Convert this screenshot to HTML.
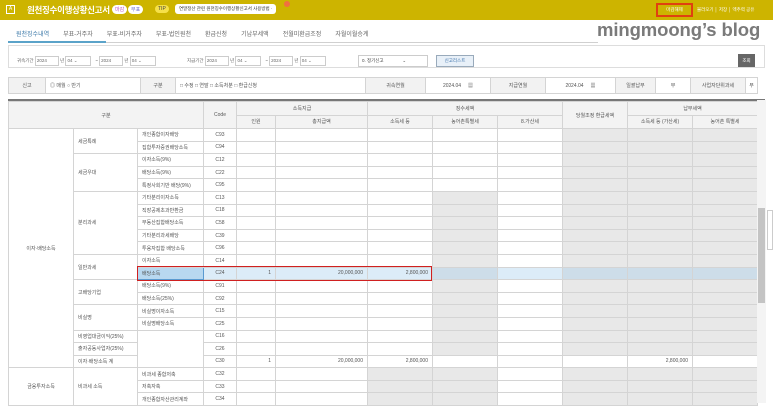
<!DOCTYPE html>
<html><head><meta charset="utf-8"><style>
*{box-sizing:border-box;margin:0;padding:0}
body{width:773px;height:403px;overflow:hidden;background:#fff;font-family:"Liberation Sans","Noto Sans CJK KR",sans-serif;font-size:5.5px;color:#444;position:relative}
.a{position:absolute;white-space:nowrap}
.top{left:0;top:0;width:773px;height:20px;background:#cdb400}
.tabs span{margin-right:14px}
.sel{border:1px solid #ccc;height:10px;background:#fff}
table{position:absolute;left:8px;top:100px;border-collapse:collapse;table-layout:fixed;width:749px}
td,th{border:1px solid #d4d4d4;height:12.6px;font-weight:normal;text-align:center;padding:0 2px;overflow:hidden;white-space:nowrap;font-size:5px;color:#555}
th{background:#f3f3f3;height:13.5px}
td.l{text-align:left;padding-left:4px}
td.r{text-align:right;padding-right:4px}
.g{background:#e8e8e8}
.hl td{background:#dcecf8}
.hl td.g{background:#cddde9}
.inf td.lbl{background:#f2f2f2}
</style></head><body>
<div class="a top"></div>
<div class="a" style="left:6px;top:5px;width:9px;height:9px;border:1px solid #fff;color:#fff;font-size:5px;text-align:center;line-height:7px">A</div>
<div class="a" style="left:27px;top:3.5px;color:#fff;font-size:8.5px;font-weight:bold;letter-spacing:-0.3px">원천징수이행상황신고서</div>
<div class="a" style="left:112px;top:5px;background:#fff;color:#c050c0;border-radius:5px;font-size:5px;padding:1px 3px">마감</div>
<div class="a" style="left:128px;top:5px;background:#fff;color:#7070d0;border-radius:5px;font-size:5px;padding:1px 3px">부표</div>
<div class="a" style="left:155px;top:5px;background:#f5e04a;color:#444;border-radius:5px;font-size:5px;padding:1px 3px">TIP</div>
<div class="a" style="left:175px;top:4px;background:#fff;border-radius:3px;font-size:4.5px;padding:2px 4px;color:#333">연말정산 관련 원천징수이행상황신고서 사용방법 ·</div>
<div class="a" style="left:284px;top:1px;width:6px;height:6px;border-radius:3px;background:#f07040"></div>
<div class="a" style="left:656px;top:3px;width:37px;height:14px;border:2px solid #e04010;color:#fff;font-size:4.5px;text-align:center;line-height:10px">마감해제</div>
<div class="a" style="left:697px;top:7px;color:#fff;font-size:4.5px">불러오기 │ 저장 │ 엑추력 공유</div>
<div class="a tabs" style="left:16px;top:29px;font-size:6px;color:#666"><span style="color:#3a78a8">원천징수내역</span><span>부표-거주자</span><span>부표-비거주자</span><span>부표-법인원천</span><span>환급신청</span><span>기납부세액</span><span>전월미환급조정</span><span>자월이월승계</span></div>
<div class="a" style="left:8px;top:42px;width:590px;height:1px;background:#d0d0d0"></div>
<div class="a" style="left:8px;top:41px;width:98px;height:2px;background:#5ba3c9"></div>
<div class="a" style="left:597px;top:19px;font-size:18.5px;font-weight:bold;color:#7a7a7a;letter-spacing:-0.1px;font-family:'Liberation Sans',sans-serif">mingmoong’s blog</div>
<div class="a" style="left:8px;top:45px;width:757px;height:1px;background:#ddd"></div>
<div class="a" style="left:8px;top:46px;width:1px;height:21px;background:#ddd"></div>
<div class="a" style="left:764px;top:46px;width:1px;height:21px;background:#ddd"></div>
<div class="a" style="left:8px;top:67px;width:757px;height:1px;background:#ddd"></div>
<div class="a" style="left:17px;top:56px;font-size:4.5px;color:#666">귀속기간 <span class="sel" style="display:inline-block;width:24px;padding:1px">2024</span> 년 <span class="sel" style="display:inline-block;width:26px;padding:1px">04 ⌄</span> &nbsp; ~ <span class="sel" style="display:inline-block;width:24px;padding:1px">2024</span> 년 <span class="sel" style="display:inline-block;width:26px;padding:1px">04 ⌄</span></div>
<div class="a" style="left:187px;top:56px;font-size:4.5px;color:#666">지급기간 <span class="sel" style="display:inline-block;width:24px;padding:1px">2024</span> 년 <span class="sel" style="display:inline-block;width:26px;padding:1px">04 ⌄</span> &nbsp; ~ <span class="sel" style="display:inline-block;width:24px;padding:1px">2024</span> 년 <span class="sel" style="display:inline-block;width:26px;padding:1px">04 ⌄</span></div>
<div class="a sel" style="left:358px;top:55px;width:70px;height:12px;font-size:4.5px;padding:2px 3px">0. 정기신고 &nbsp; &nbsp; &nbsp; &nbsp; &nbsp; &nbsp; &nbsp; ⌄</div>
<div class="a" style="left:436px;top:55px;width:38px;height:12px;border:1px solid #9ab;background:#e8f0f8;color:#3a6fa8;font-size:4.5px;text-align:center;line-height:10px">신고리스트</div>
<div class="a" style="left:738px;top:54px;width:17px;height:13px;background:#666;color:#fff;font-size:4.5px;text-align:center;line-height:13px">조회</div>
<table style="top:77px" class="inf"><tr style="height:16px">
<td class="lbl" style="width:37px">신고</td><td class="l" style="width:95px">◎ 매월 ○ 반기</td><td class="lbl" style="width:35px">구분</td><td class="l" style="width:190px">□ 수정 □ 연말 □ 소득처분 □ 환급신청</td><td class="lbl" style="width:60px">귀속연월</td><td style="width:65px">2024.04 &nbsp; &nbsp; ▦</td><td class="lbl" style="width:55px">지급연월</td><td style="width:70px">2024.04 &nbsp; &nbsp; ▦</td><td class="lbl" style="width:40px">일괄납부</td><td style="width:35px">부</td><td class="lbl" style="width:55px">사업자단위과세</td><td style="width:12px">부</td></tr></table>
<div class="a" style="left:8px;top:99px;width:757px;height:2px;background:#777"></div>
<table style="top:101px">
<colgroup><col style="width:65px"><col style="width:64px"><col style="width:66px"><col style="width:33px"><col style="width:39px"><col style="width:92px"><col style="width:65px"><col style="width:65px"><col style="width:65px"><col style="width:65px"><col style="width:65px"><col style="width:65px"></colgroup>
<tr><th colspan="3" rowspan="2">구분</th><th rowspan="2">Code</th><th colspan="2">소득지급</th><th colspan="3">징수세액</th><th rowspan="2">당월조정 환급세액</th><th colspan="2">납부세액</th></tr>
<tr><th>인원</th><th>총지급액</th><th>소득세 등</th><th>농어촌특별세</th><th>8.가산세</th><th>소득세 등 (가산세)</th><th>농어촌 특별세</th></tr>
<tr><td rowspan="19" style="background:#fff">이자·배당소득</td><td rowspan="2" class="l">세금특례</td><td class="l">개인종합이자배당</td><td>C93</td><td></td><td></td><td></td><td></td><td></td><td class="g"></td><td class="g"></td><td class="g"></td></tr>
<tr><td class="l">집합투자증권배당소득</td><td>C94</td><td></td><td></td><td></td><td></td><td></td><td class="g"></td><td class="g"></td><td class="g"></td></tr>
<tr><td rowspan="3" class="l">세금우대</td><td class="l">이자소득(9%)</td><td>C12</td><td></td><td></td><td></td><td></td><td></td><td class="g"></td><td class="g"></td><td class="g"></td></tr>
<tr><td class="l">배당소득(9%)</td><td>C22</td><td></td><td></td><td></td><td></td><td></td><td class="g"></td><td class="g"></td><td class="g"></td></tr>
<tr><td class="l">특정사회기반 배당(9%)</td><td>C95</td><td></td><td></td><td></td><td></td><td></td><td class="g"></td><td class="g"></td><td class="g"></td></tr>
<tr><td rowspan="5" class="l">분리과세</td><td class="l">기타분리이자소득</td><td>C13</td><td></td><td></td><td></td><td class="g"></td><td></td><td class="g"></td><td class="g"></td><td class="g"></td></tr>
<tr><td class="l">직장공제초과반환금</td><td>C18</td><td></td><td></td><td></td><td class="g"></td><td></td><td class="g"></td><td class="g"></td><td class="g"></td></tr>
<tr><td class="l">부동산집합배당소득</td><td>C58</td><td></td><td></td><td></td><td class="g"></td><td></td><td class="g"></td><td class="g"></td><td class="g"></td></tr>
<tr><td class="l">기타분리과세배당</td><td>C39</td><td></td><td></td><td></td><td class="g"></td><td></td><td class="g"></td><td class="g"></td><td class="g"></td></tr>
<tr><td class="l">투융자집합 배당소득</td><td>C96</td><td></td><td></td><td></td><td class="g"></td><td></td><td class="g"></td><td class="g"></td><td class="g"></td></tr>
<tr><td rowspan="2" class="l">일반과세</td><td class="l">이자소득</td><td>C14</td><td></td><td></td><td></td><td class="g"></td><td></td><td class="g"></td><td class="g"></td><td class="g"></td></tr>
<tr class="hl"><td class="l" style="background:#b8d8f0;border:1px solid #5a9ad0">배당소득</td><td>C24</td><td class="r">1</td><td class="r">20,000,000</td><td class="r">2,800,000</td><td class="g"></td><td></td><td class="g"></td><td class="g"></td><td class="g"></td></tr>
<tr><td rowspan="2" class="l">고배당기업</td><td class="l">배당소득(9%)</td><td>C91</td><td></td><td></td><td></td><td class="g"></td><td></td><td class="g"></td><td class="g"></td><td class="g"></td></tr>
<tr><td class="l">배당소득(25%)</td><td>C92</td><td></td><td></td><td></td><td class="g"></td><td></td><td class="g"></td><td class="g"></td><td class="g"></td></tr>
<tr><td rowspan="2" class="l">비실명</td><td class="l">비실명이자소득</td><td>C15</td><td></td><td></td><td></td><td class="g"></td><td></td><td class="g"></td><td class="g"></td><td class="g"></td></tr>
<tr><td class="l">비실명배당소득</td><td>C25</td><td></td><td></td><td></td><td class="g"></td><td></td><td class="g"></td><td class="g"></td><td class="g"></td></tr>
<tr><td class="l">비영업대금이익(25%)</td><td rowspan="3"></td><td>C16</td><td></td><td></td><td></td><td class="g"></td><td></td><td class="g"></td><td class="g"></td><td class="g"></td></tr>
<tr><td class="l">출자공동사업자(25%)</td><td>C26</td><td></td><td></td><td></td><td class="g"></td><td></td><td class="g"></td><td class="g"></td><td class="g"></td></tr>
<tr><td class="l">이자·배당소득 계</td><td>C30</td><td class="r">1</td><td class="r">20,000,000</td><td class="r">2,800,000</td><td></td><td></td><td></td><td class="r">2,800,000</td><td></td></tr>
<tr><td rowspan="3">금융투자소득</td><td rowspan="3" class="l">비과세 소득</td><td class="l">비과세 종합저축</td><td>C32</td><td></td><td></td><td class="g"></td><td class="g"></td><td></td><td class="g"></td><td class="g"></td><td class="g"></td></tr>
<tr><td class="l">저축자축</td><td>C33</td><td></td><td></td><td class="g"></td><td class="g"></td><td></td><td class="g"></td><td class="g"></td><td class="g"></td></tr>
<tr><td class="l">개인종합자산관리계좌</td><td>C34</td><td></td><td></td><td class="g"></td><td class="g"></td><td></td><td class="g"></td><td class="g"></td><td class="g"></td></tr>
</table>
<div class="a" style="left:137px;top:266px;width:295px;height:15px;border:1.5px solid #d02020"></div>
<div class="a" style="left:757px;top:100px;width:9px;height:303px;background:#f4f4f4"></div>
<div class="a" style="left:758px;top:208px;width:7px;height:95px;background:#c4c4c4"></div>
<div class="a" style="left:767px;top:210px;width:6px;height:40px;border:1px solid #ccc;background:#fff"></div>
</body></html>
